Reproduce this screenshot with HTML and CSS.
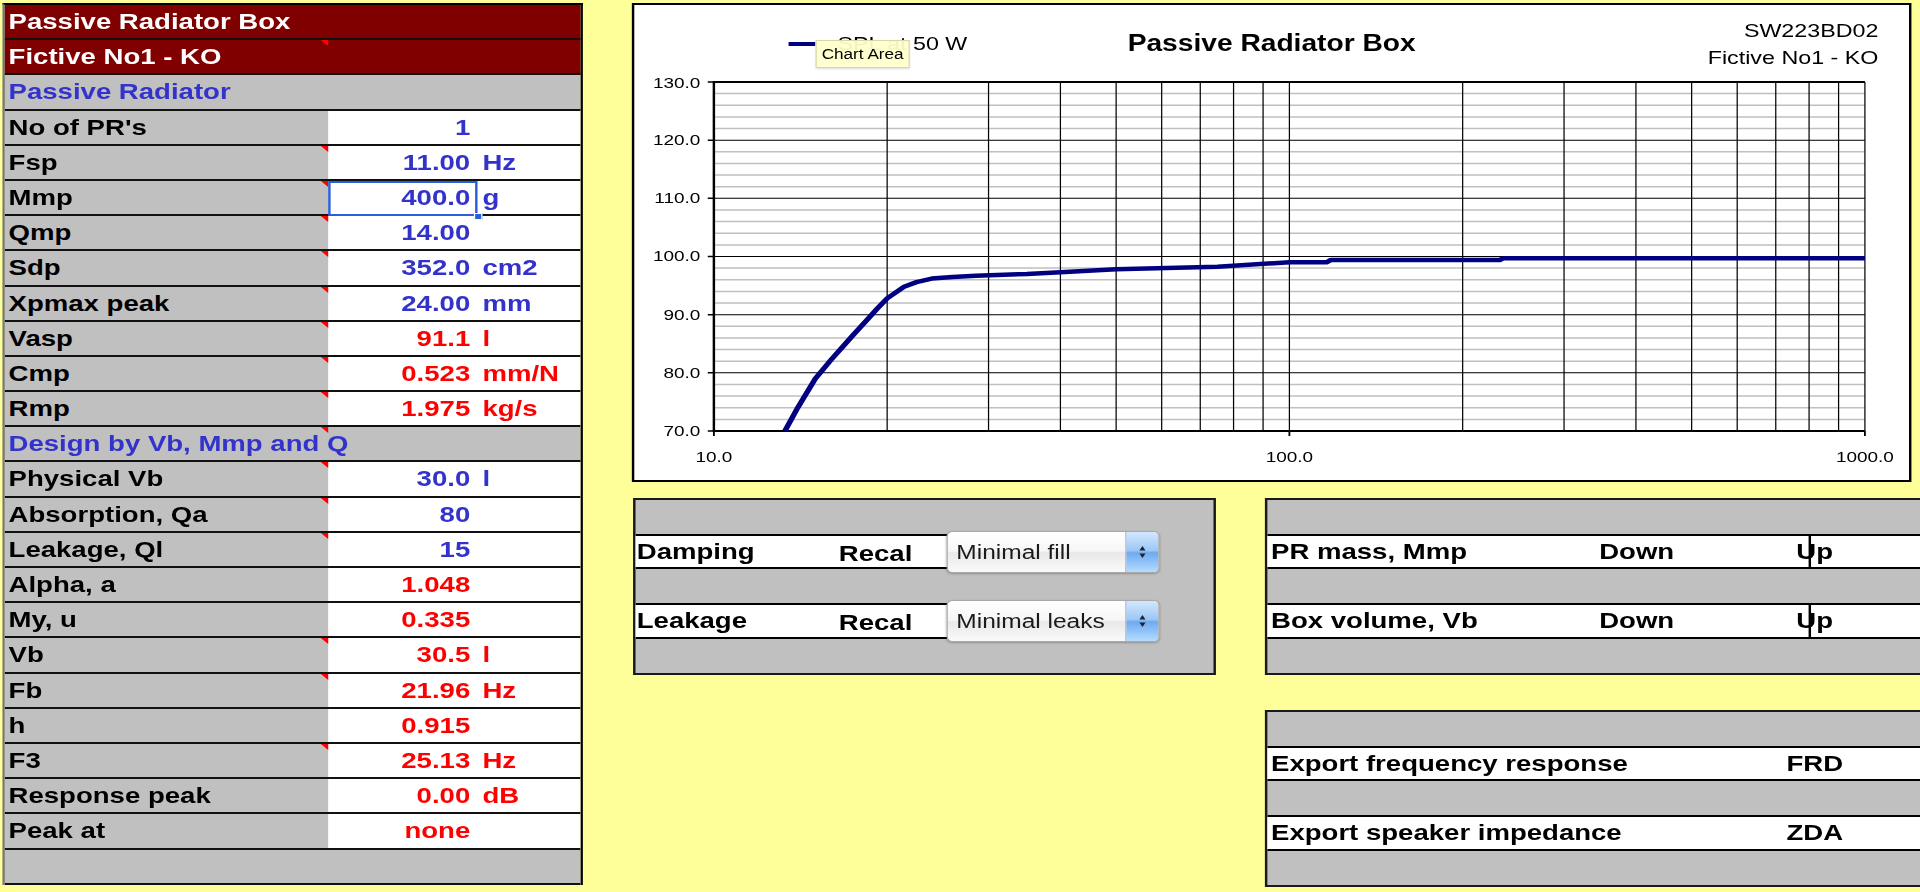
FILE: index.html
```html
<!DOCTYPE html>
<html lang="en">
<head>
  <meta charset="UTF-8" />
  <meta name="viewport" content="width=device-width, initial-scale=1.0" />
  <title>Passive Radiator Box</title>
  <link rel="stylesheet" href="styles.css">
</head>

<body>
  <div class="sheet">

    <!-- Parameter table -->
    <div class="params">
      <div class="row title"><div class="label">Passive Radiator Box</div></div>
      <div class="row title"><div class="label note">Fictive No1 - KO</div></div>
      <div class="row section"><div class="label">Passive Radiator</div></div>
      <div class="row"><div class="label">No of PR's</div><div class="num blue">1</div><div class="unit"></div></div>
      <div class="row"><div class="label note">Fsp</div><div class="num blue">11.00</div><div class="unit blue">Hz</div></div>
      <div class="row"><div class="label note">Mmp</div><div class="num blue sel">400.0</div><div class="unit blue">g</div></div>
      <div class="row"><div class="label note">Qmp</div><div class="num blue">14.00</div><div class="unit"></div></div>
      <div class="row"><div class="label note">Sdp</div><div class="num blue">352.0</div><div class="unit blue">cm2</div></div>
      <div class="row"><div class="label note">Xpmax peak</div><div class="num blue">24.00</div><div class="unit blue">mm</div></div>
      <div class="row"><div class="label note">Vasp</div><div class="num red">91.1</div><div class="unit red">l</div></div>
      <div class="row"><div class="label note">Cmp</div><div class="num red">0.523</div><div class="unit red">mm/N</div></div>
      <div class="row"><div class="label note">Rmp</div><div class="num red">1.975</div><div class="unit red">kg/s</div></div>
      <div class="row section"><div class="label note">Design by Vb, Mmp and Q</div></div>
      <div class="row"><div class="label note">Physical Vb</div><div class="num blue">30.0</div><div class="unit blue">l</div></div>
      <div class="row"><div class="label note">Absorption, Qa</div><div class="num blue">80</div><div class="unit"></div></div>
      <div class="row"><div class="label note">Leakage, Ql</div><div class="num blue">15</div><div class="unit"></div></div>
      <div class="row"><div class="label">Alpha, a</div><div class="num red">1.048</div><div class="unit"></div></div>
      <div class="row"><div class="label">My, u</div><div class="num red">0.335</div><div class="unit"></div></div>
      <div class="row"><div class="label note">Vb</div><div class="num red">30.5</div><div class="unit red">l</div></div>
      <div class="row"><div class="label note">Fb</div><div class="num red">21.96</div><div class="unit red">Hz</div></div>
      <div class="row"><div class="label">h</div><div class="num red">0.915</div><div class="unit"></div></div>
      <div class="row"><div class="label note">F3</div><div class="num red">25.13</div><div class="unit red">Hz</div></div>
      <div class="row"><div class="label">Response peak</div><div class="num red">0.00</div><div class="unit red">dB</div></div>
      <div class="row"><div class="label">Peak at</div><div class="num red">none</div><div class="unit"></div></div>
      <div class="row section"><div class="label"></div></div>
    </div>

    <div class="main">
      <!-- Chart -->
      <div class="chart">
        <div class="chart-head">
          <div class="legend"><span class="swatch"></span><span>SPL at 50 W</span></div>
          <div class="chart-title">Passive Radiator Box</div>
          <div class="chart-id">
            <div>SW223BD02</div>
            <div>Fictive No1 - KO</div>
          </div>
        </div>

        <svg class="plot" width="1041" height="405" viewBox="0 0 1041 405">
          <path class="minor" d="M65 18.6H1005M65 30.3H1005M65 41.9H1005M65 53.5H1005M65 76.8H1005M65 88.4H1005M65 100.1H1005M65 111.7H1005M65 135H1005M65 146.6H1005M65 158.2H1005M65 169.9H1005M65 193.1H1005M65 204.8H1005M65 216.4H1005M65 228H1005M65 251.3H1005M65 262.9H1005M65 274.6H1005M65 286.2H1005M65 309.5H1005M65 321.1H1005M65 332.7H1005M65 344.4H1005"/>
          <path class="major" d="M65 65.2H1005M65 123.3H1005M65 181.5H1005M65 239.7H1005M65 297.8H1005"/>
          <path class="major" d="M206.5 7V356M289.3 7V356M348 7V356M393.5 7V356M430.7 7V356M462.2 7V356M489.4 7V356M513.5 7V356M535 7V356M676.5 7V356M759.3 7V356M818 7V356M863.5 7V356M900.7 7V356M932.2 7V356M959.4 7V356M983.5 7V356M1005 7V356"/>
          <path class="axis" d="M64 7H1005M65 6V357M64 356H1005"/>
          <path class="tick" d="M60 7H65M60 65.2H65M60 123.3H65M60 181.5H65M60 239.7H65M60 297.8H65M60 356H65M65 356V361M535 356V361M1005 356V361"/>
          <polyline class="spl" points="123,356 133.7,332.2 147.8,303.7 160.9,284.5 170.3,271.7 179.2,259.4 190.1,244.9 198.2,233.9 206.5,223.4 220.3,211.8 230.5,207.1 242.9,203.6 260,201.9 278.8,200.7 320.7,199 348,197.2 393.5,194.3 476.3,191.7 535,187.3 565.3,187.3 568.8,185 706.8,185 709.4,183.3 1005,183.3"/>
          <g class="ylabels">
            <text x="54" y="12.5">130.0</text>
            <text x="54" y="70.2">120.0</text>
            <text x="54" y="128.3">110.0</text>
            <text x="54" y="186.5">100.0</text>
            <text x="54" y="244.7">90.0</text>
            <text x="54" y="302.8">80.0</text>
            <text x="54" y="361">70.0</text>
          </g>
          <g class="xlabels">
            <text x="65" y="387">10.0</text>
            <text x="535" y="387">100.0</text>
            <text x="1005" y="387">1000.0</text>
          </g>
        </svg>

        <div class="tip">Chart Area</div>
      </div>

      <!-- Controls -->
      <div class="controls">
        <div class="panel">
          <div class="gap"></div>
          <div class="line">
            <div class="cell recal"><span>Damping</span><span class="act">Recal</span></div>
            <div class="popup">
              <span class="popup-text">Minimal fill</span>
              <span class="stepper">
                <svg width="26" height="40" viewBox="0 0 26 40"><path d="M10.5 18.5L13 14L15.5 18.5ZM10.5 21.5L13 26L15.5 21.5Z"/></svg>
              </span>
            </div>
          </div>
          <div class="gap"></div>
          <div class="line">
            <div class="cell recal"><span>Leakage</span><span class="act">Recal</span></div>
            <div class="popup">
              <span class="popup-text">Minimal leaks</span>
              <span class="stepper">
                <svg width="26" height="40" viewBox="0 0 26 40"><path d="M10.5 18.5L13 14L15.5 18.5ZM10.5 21.5L13 26L15.5 21.5Z"/></svg>
              </span>
            </div>
          </div>
          <div class="gap"></div>
        </div>

        <div class="panel">
          <div class="gap"></div>
          <div class="line">
            <div class="cell spin"><span>PR mass, Mmp</span><span>Down</span><span class="up">Up</span></div>
          </div>
          <div class="gap"></div>
          <div class="line">
            <div class="cell spin"><span>Box volume, Vb</span><span>Down</span><span class="up">Up</span></div>
          </div>
          <div class="gap"></div>
        </div>

        <div class="panel export">
          <div class="gap"></div>
          <div class="line">
            <div class="cell exp"><span>Export frequency response</span><span>FRD</span></div>
          </div>
          <div class="gap"></div>
          <div class="line">
            <div class="cell exp"><span>Export speaker impedance</span><span>ZDA</span></div>
          </div>
          <div class="gap"></div>
        </div>
      </div>
    </div>

  </div>
</body>
</html>
```

FILE: styles.css
```css
html,
body {
  margin: 0;
  background-color: #ffff99;
  overflow: hidden;
}

body {
  font-family: "Liberation Sans", Arial, sans-serif;
  font-size: 22.5px;
  font-weight: bold;
  color: #000;
}

/* the sheet is laid out at 1568px and stretched to the 1920px window */
.sheet {
  width: 1568px;
  height: 892px;
  box-sizing: border-box;
  padding: 3px 0 0 2px;
  display: flex;
  gap: 40px;
  transform: scaleX(1.2245);
  transform-origin: 0 0;
}

/* Parameter table */
.params {
  width: 474px;
  box-sizing: border-box;
  flex: none;
  align-self: flex-start;
  border-top: 2px solid #000;
  border-left: 2px solid #777;
  border-right: 2px solid #000;
}

.row {
  display: grid;
  grid-template-columns: 264px 121px 1fr;
  height: 35.2px;
  box-sizing: border-box;
  border-bottom: 2px solid #111;
  background-color: #fff;
  line-height: 33px;
  white-space: nowrap;
}

.row > div {
  position: relative;
}

.label {
  background-color: #c0c0c0;
  padding-left: 3px;
}

.row.title {
  background-color: #800000;
  color: #fff;
}

.row.section {
  background-color: #c0c0c0;
  color: #3333cc;
}

.row.title .label,
.row.section .label {
  background: none;
}

.num {
  text-align: right;
  padding-right: 5px;
}

.unit {
  padding-left: 5px;
}

.blue {
  color: #3333cc;
}

.red {
  color: #ff0000;
}

/* comment marker */
.note::after {
  content: "";
  position: absolute;
  top: 0;
  right: 0;
  border-top: 6px solid #ff0000;
  border-left: 6px solid transparent;
}

/* active cell */
.num.sel::before {
  content: "";
  position: absolute;
  top: 0;
  left: 0;
  right: -1px;
  bottom: -2px;
  border: 2px solid #2b5fd9;
}

.num.sel::after {
  content: "";
  position: absolute;
  right: -5px;
  bottom: -6px;
  width: 5px;
  height: 5px;
  background-color: #2b5fd9;
  border: 1px solid #fff;
}

/* Right side */
.main {
  width: 1057px;
  flex: none;
}

.chart {
  position: relative;
  width: 1045px;
  height: 479px;
  box-sizing: border-box;
  border: 2px solid #000;
  background-color: #fff;
}

.chart-head {
  display: grid;
  grid-template-columns: 1fr auto 1fr;
  align-items: start;
  height: 70px;
  box-sizing: border-box;
  padding-top: 12px;
  font-size: 19px;
  font-weight: normal;
}

.legend {
  display: flex;
  align-items: center;
  gap: 18px;
  margin-top: 12px;
  padding-left: 126px;
  line-height: 30px;
}

.swatch {
  width: 22px;
  height: 4px;
  background-color: #000080;
}

.chart-title {
  margin-top: 11px;
  font-size: 23px;
  font-weight: bold;
  line-height: 30px;
}

.chart-id {
  justify-self: end;
  padding-right: 25px;
  text-align: right;
  line-height: 27px;
}

.plot {
  display: block;
  overflow: visible;
}

.plot text {
  font-family: "Liberation Sans", Arial, sans-serif;
  font-size: 15.5px;
  font-weight: normal;
  fill: #000;
}

.ylabels {
  text-anchor: end;
}

.xlabels {
  text-anchor: middle;
}

.minor {
  fill: none;
  stroke: #c0c0c0;
  stroke-width: 1.5;
}

.major {
  fill: none;
  stroke: #000;
  stroke-width: 1;
}

.axis {
  fill: none;
  stroke: #000;
  stroke-width: 2;
}

.tick {
  fill: none;
  stroke: #000;
  stroke-width: 1.5;
}

.spl {
  fill: none;
  stroke: #000080;
  stroke-width: 4.5;
  stroke-linejoin: round;
}

.tip {
  position: absolute;
  left: 148px;
  top: 35px;
  padding: 0 4px;
  line-height: 26px;
  font-size: 14px;
  font-weight: normal;
  background-color: rgba(255, 255, 204, 0.94);
  border: 1px solid #d6d6a8;
  box-shadow: 0 1px 2px rgba(0, 0, 0, 0.15);
}

/* Control panels */
.controls {
  display: grid;
  grid-template-columns: 476px 540px;
  column-gap: 40px;
  row-gap: 35px;
  margin-top: 16px;
  padding-left: 1px;
}

.panel {
  height: 177px;
  box-sizing: border-box;
  border: 2px solid #1a1a1a;
  background-color: #c0c0c0;
}

.panel.export {
  grid-column: 2;
}

.gap {
  height: 33.9px;
}

.line {
  display: flex;
  align-items: center;
  height: 35.6px;
}

.cell {
  height: 100%;
  box-sizing: border-box;
  background-color: #fff;
  border-top: 2px solid #000;
  border-bottom: 2px solid #000;
  line-height: 31.6px;
  white-space: nowrap;
}

.recal {
  display: grid;
  grid-template-columns: 165px 1fr;
  width: 255px;
  padding-left: 1px;
}

.act {
  padding-top: 2px;
}

.spin {
  flex: 1;
  display: grid;
  grid-template-columns: 268px 161px 1fr;
  padding-left: 3px;
}

.up {
  position: relative;
}

.up::after {
  content: "";
  position: absolute;
  top: 0;
  bottom: 0;
  left: 10px;
  width: 2px;
  background-color: #000;
}

.exp {
  flex: 1;
  display: grid;
  grid-template-columns: 421px 1fr;
  padding-left: 3px;
}

.popup {
  display: flex;
  width: 174px;
  height: 42px;
  margin-left: -1px;
  box-sizing: border-box;
  border: 1px solid #a8a8a8;
  border-radius: 5px;
  background: linear-gradient(#ffffff, #f6f6f6 48%, #e8e8e8 52%, #fafafa);
  box-shadow: 0 1px 2px rgba(0, 0, 0, 0.25);
  font-size: 20px;
  font-weight: normal;
  color: #1a1a1a;
}

.popup-text {
  flex: 1;
  padding-left: 7px;
  line-height: 40px;
}

.stepper {
  width: 26px;
  border-left: 1px solid #6b93cf;
  border-radius: 0 4px 4px 0;
  background: linear-gradient(#d3e7fd, #9cc7f7 46%, #6eaaf0 52%, #b4dcff);
}

.stepper svg {
  display: block;
  fill: #1d2430;
}
```
